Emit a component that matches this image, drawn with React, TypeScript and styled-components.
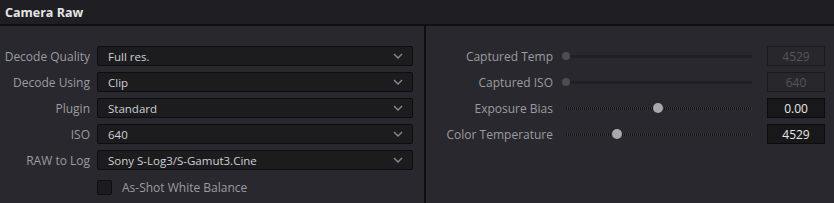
import React from 'react';
import styled, { createGlobalStyle } from 'styled-components';

const GlobalStyle = createGlobalStyle`
  html, body {
    margin: 0;
    padding: 0;
    background: #28282e;
  }
  body {
    font-family: "Open Sans", "Liberation Sans", sans-serif;
    font-size: 12px;
    -webkit-font-smoothing: antialiased;
  }
`;

interface Choice {
  label: string;
  value: string;
}

interface SliderRow {
  label: string;
  value: string;
  position: number;
  disabled?: boolean;
}

const choices: Array<Choice> = [
  { label: 'Decode Quality', value: 'Full res.' },
  { label: 'Decode Using', value: 'Clip' },
  { label: 'Plugin', value: 'Standard' },
  { label: 'ISO', value: '640' },
  { label: 'RAW to Log', value: 'Sony S-Log3/S-Gamut3.Cine' },
];

const sliders: Array<SliderRow> = [
  { label: 'Captured Temp', value: '4529', position: 0, disabled: true },
  { label: 'Captured ISO', value: '640', position: 0, disabled: true },
  { label: 'Exposure Bias', value: '0.00', position: 49.5 },
  { label: 'Color Temperature', value: '4529', position: 27.5 },
];

const Chevron = () => (
  <svg width="10" height="6" viewBox="0 0 10 6">
    <path d="M1 1 L5 5 L9 1" fill="none" stroke="#8a8a8e" strokeWidth="1.4" />
  </svg>
);

export default function App() {
  return (
    <Panel>
      <GlobalStyle />
      <Header>Camera Raw</Header>
      <Body>
        <LeftColumn>
          {choices.map((choice) => (
            <Row key={choice.label}>
              <Label width={97}>{choice.label}</Label>
              <Select>
                <span>{choice.value}</span>
                <Chevron />
              </Select>
            </Row>
          ))}
          <CheckRow>
            <CheckBox />
            <CheckText>As-Shot White Balance</CheckText>
          </CheckRow>
        </LeftColumn>
        <Divider />
        <RightColumn>
          {sliders.map((s) => (
            <Row key={s.label}>
              <Label width={134}>{s.label}</Label>
              <Track disabled={s.disabled}>
                <Knob
                  disabled={s.disabled}
                  style={{ left: `${s.position}%` }}
                />
              </Track>
              <ValueBox disabled={s.disabled}>{s.value}</ValueBox>
            </Row>
          ))}
        </RightColumn>
      </Body>
    </Panel>
  );
}

const Panel = styled.div`
  width: 834px;
  height: 203px;
  display: flex;
  flex-direction: column;
  background: #28282e;
  overflow: hidden;
`;

const Header = styled.div`
  height: 24px;
  flex-shrink: 0;
  display: flex;
  align-items: center;
  padding-left: 5px;
  background: #1f1e23;
  border-bottom: 2px solid #0f0f11;
  color: #e6e6e6;
  font-weight: 700;
  font-size: 12.5px;
`;

const Body = styled.div`
  flex: 1;
  display: flex;
`;

const LeftColumn = styled.div`
  width: 424px;
  display: flex;
  flex-direction: column;
  gap: 6px;
  padding-top: 20px;
  box-sizing: border-box;
`;

const RightColumn = styled.div`
  flex: 1;
  display: flex;
  flex-direction: column;
  gap: 6px;
  padding-top: 20px;
`;

const Divider = styled.div`
  width: 2px;
  background: #0f0f11;
`;

const Row = styled.div`
  height: 20px;
  display: flex;
  align-items: center;
`;

const Label = styled.div<{ width: number }>`
  width: ${(p) => p.width}px;
  box-sizing: border-box;
  flex-shrink: 0;
  text-align: right;
  color: #9c9ca0;
  padding-right: 7px;
  white-space: nowrap;
  font-size: 12px;
`;

const Select = styled.div`
  width: 316px;
  height: 20px;
  box-sizing: border-box;
  display: flex;
  align-items: center;
  justify-content: space-between;
  padding: 0 9px 0 10px;
  background: #1c1c1f;
  border: 1px solid #0e0e10;
  border-radius: 2px;
  color: #cfcfd2;
  font-size: 11.5px;
`;

const CheckRow = styled.div`
  display: flex;
  align-items: center;
  height: 16px;
  margin-top: 3px;
  padding-left: 97px;
`;

const CheckBox = styled.div`
  width: 15px;
  height: 15px;
  box-sizing: border-box;
  background: #1c1c1f;
  border: 1px solid #0e0e10;
  border-radius: 2px;
`;

const CheckText = styled.span`
  margin-left: 10px;
  color: #9c9ca0;
  font-size: 12px;
`;

const Track = styled.div<{ disabled?: boolean }>`
  position: relative;
  width: 186px;
  margin-left: 6px;
  height: 3px;
  background: ${(p) =>
    p.disabled
      ? '#202024'
      : 'repeating-linear-gradient(90deg, #141416 0 1px, #3a3a3e 1px 2px)'};
`;

const Knob = styled.div<{ disabled?: boolean }>`
  position: absolute;
  top: 50%;
  width: ${(p) => (p.disabled ? 8 : 10)}px;
  height: ${(p) => (p.disabled ? 8 : 10)}px;
  border-radius: 50%;
  transform: translate(-50%, -50%);
  background: ${(p) => (p.disabled ? '#4c4c50' : '#a9a9ac')};
`;

const ValueBox = styled.div<{ disabled?: boolean }>`
  margin-left: 15px;
  width: 58px;
  height: 20px;
  box-sizing: border-box;
  display: flex;
  align-items: center;
  justify-content: center;
  background: ${(p) => (p.disabled ? '#28282c' : '#18181a')};
  border: 1px solid ${(p) => (p.disabled ? '#1a1a1d' : '#0c0c0e')};
  color: ${(p) => (p.disabled ? '#555558' : '#e8e8ea')};
`;
